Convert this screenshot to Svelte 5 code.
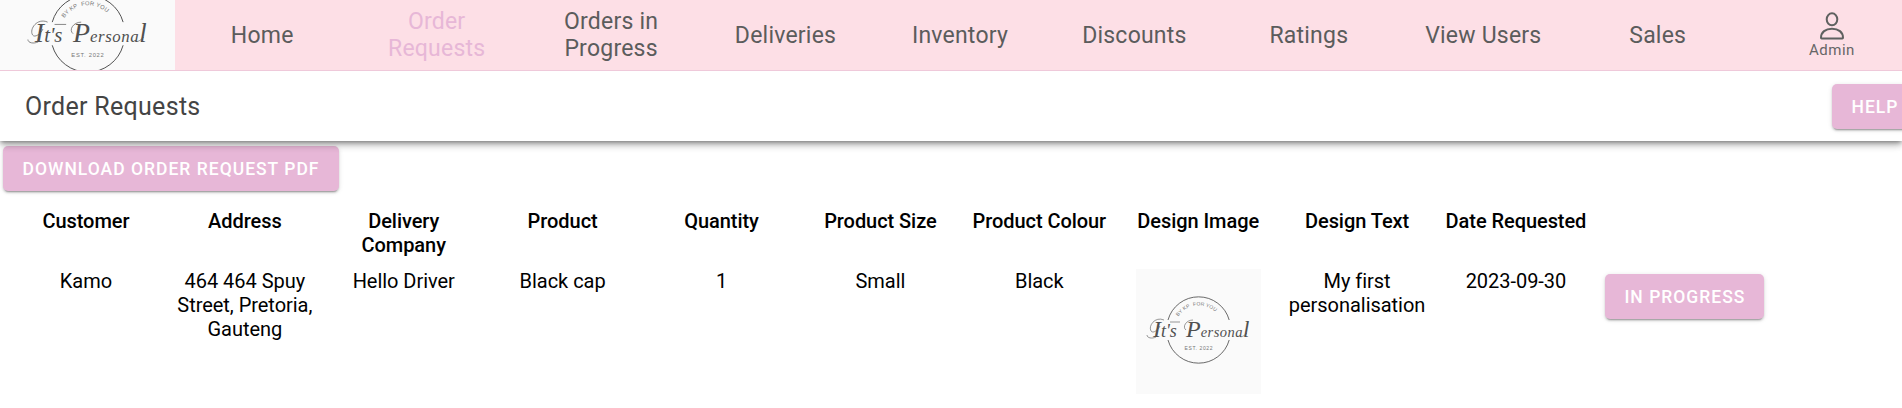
<script>
  const links = ['Home', 'Order Requests', 'Orders in Progress', 'Deliveries', 'Inventory', 'Discounts', 'Ratings', 'View Users', 'Sales'];
  const columns = ['Customer', 'Address', 'Delivery Company', 'Product', 'Quantity', 'Product Size', 'Product Colour', 'Design Image', 'Design Text', 'Date Requested'];
  const order = ['Kamo', '464 464 Spuy Street, Pretoria, Gauteng', 'Hello Driver', 'Black cap', '1', 'Small', 'Black', null, 'My first personalisation', '2023-09-30'];
</script>

{#snippet logo(viewBox, cls, id)}
  <svg class={cls} {viewBox}>
    <path d="M32 51A31.8 31.8 0 0 1 93.2 51M93.2 71A31.8 31.8 0 0 1 32 71" fill="none" stroke="#444" stroke-width=".8" />
    <path {id} d="M40.5 51A24.3 24.3 0 0 1 85 51" fill="none" />
    <text class="tiny"><textPath href={'#' + id} startOffset="4" textLength="42">BY KP&#160; FOR YOU</textPath></text>
    <g class="script">
      <text x="17" y="68" font-size="24">I<tspan font-size="18">t's</tspan></text>
      <text x="50" y="68" font-size="24">P<tspan font-size="14.500" letter-spacing=".5">ersona</tspan><tspan font-size="23">l</tspan></text>
    </g>
    <path d="M28 51C19 47 12 57 15 62C17 65 22 61 24 57M20 68C16 70 11 69 11 66M34 53L44 53M57 51C50 51 46 58 50 61M104 67.500C106 68.500 109 66 111 64" fill="none" stroke="#555" stroke-width=".6" />
    <text class="tiny" x="48.5" y="81" textLength="28">EST. 2022</text>
  </svg>
{/snippet}

<header>
  {@render logo('-13.1 31.9 151.1 60.44', 'brand', 'brand-arc')}
  <nav>
    {#each links as link, i}
      <a class:active={i === 1}><span>{link}</span></a>
    {/each}
  </nav>
  <div class="account">
    <svg width="26" height="28" viewBox="0 0 26 28" fill="none" stroke="#5f6160" stroke-width="2">
      <ellipse cx="13" cy="7.3" rx="5.3" ry="6" />
      <path d="M2 25.8C2 20.2 6.5 16.7 13 16.7S24 20.2 24 25.8C24 26.2 23.7 26.5 23.3 26.5H2.7C2.3 26.5 2 26.2 2 25.8Z" />
    </svg>
    <span>Admin</span>
  </div>
</header>

<div class="toolbar">
  <h1>Order Requests</h1>
  <button class="help">HELP</button>
</div>

<main>
  <button class="download">DOWNLOAD ORDER REQUEST PDF</button>
  <div class="row head">
    {#each columns as column}<div>{column}</div>{/each}
  </div>
  <div class="row">
    {#each order as cell}
      <div>
        {#if cell === null}{@render logo('0 0 125 125', 'design', 'design-arc')}{:else}{cell}{/if}
      </div>
    {/each}
    <button class="status">IN PROGRESS</button>
  </div>
</main>

<style>
  :global(body) { margin: 0; background: #fff; overflow: hidden; font-family: Roboto, sans-serif; }
  header { position: relative; z-index: 2; display: flex; height: 70px; background: #fddfe6; border-bottom: 1px solid #efc9da; }
  nav { display: flex; width: 1570px; }
  nav a { flex: 1; display: flex; align-items: center; justify-content: center; font-size: 23px; line-height: 27px; letter-spacing: .22px; color: #5b5c5c; text-align: center; }
  nav a span { width: 130px; }
  nav a.active { color: #e7b7d7; }
  .account { flex: 1; display: flex; flex-direction: column; align-items: center; padding: 12px 0 0 17px; color: #666; font-size: 15px; line-height: 19px; letter-spacing: .5px; }
  .account svg { flex: none; }
  .account span { padding-top: 1px; }
  .toolbar { position: relative; display: flex; align-items: center; justify-content: space-between; height: 70px; background: #fff; box-shadow: 0 2px 4px -1px rgba(0,0,0,.35), 0 4px 7px rgba(0,0,0,.24), 0 1px 10px rgba(0,0,0,.12); z-index: 1; }
  h1 { margin: 2px 0 0 25px; font-size: 25px; line-height: 32px; font-weight: 400; letter-spacing: .3px; color: #444; }
  button { flex: none; display: block; height: 45px; padding: 1px 0 0; border: 0; border-radius: 5px; background: #e7b7d7; color: #fff; font: 500 17.5px/44px Roboto, sans-serif; letter-spacing: 1px; text-align: center; white-space: nowrap; box-shadow: 0 3px 1px -2px rgba(0,0,0,.2), 0 2px 2px rgba(0,0,0,.14), 0 1px 5px rgba(0,0,0,.12); }
  .help { width: 86px; margin-right: -16px; }
  .download { width: 336px; margin: 5px 0 0 3px; }
  .status { width: 159px; margin: 5px 0 0 10px; }
  .row { display: flex; align-items: flex-start; padding-left: 6.5px; font-size: 20px; line-height: 24px; letter-spacing: -.04px; color: #000; text-align: center; }
  .row > div { flex: none; box-sizing: border-box; width: 158.9px; padding: 0 8px; }
  .head { margin: 18px 0 12px; font-weight: 500; letter-spacing: -.06px; }
  .head > div { padding: 0 4px; }
  .row .status { letter-spacing: 1px; }
  .brand { flex: none; width: 175px; height: 70px; background: #fafafa; }
  .design { display: block; width: 125px; height: 125px; margin: 0 auto; background: #fafafa; }
  .script { font-family: "Liberation Serif", serif; font-style: italic; fill: #505050; }
  .tiny { font: 5px "Liberation Sans", sans-serif; fill: #777; }
</style>
